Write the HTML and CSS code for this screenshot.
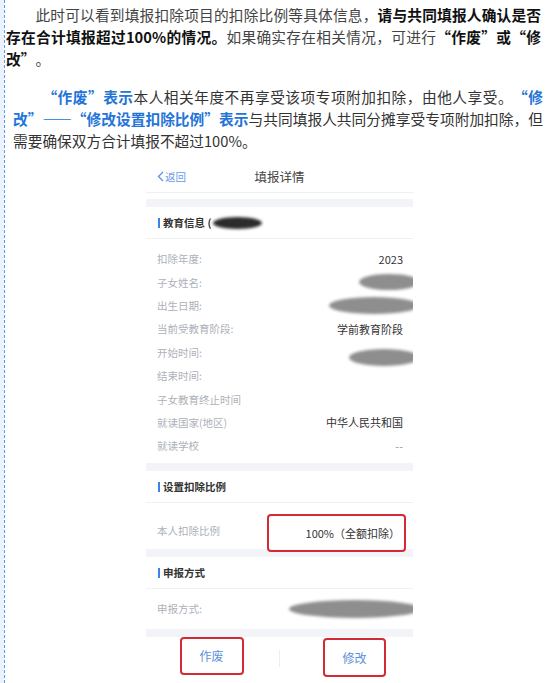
FILE: index.html
```html
<!DOCTYPE html>
<html lang="zh-CN">
<head>
    <meta charset="UTF-8">
    <meta name="viewport" content="width=device-width, initial-scale=1.0">
    <title>填报详情说明</title>
    <link rel="stylesheet" href="styles.css">
</head>
<body>
    <div class="page">
        <p class="intro">此时可以看到填报扣除项目的扣除比例等具体信息，<b>请与共同填报人确认是否存在合计填报超过100%的情况。</b>如果确实存在相关情况，可进行<b>“作废”或“修改”</b>。</p>
        <p class="note"><span class="hl">“作废”表示</span>本人相关年度不再享受该项专项附加扣除，由他人享受。<span class="hl">“修改”——“修改设置扣除比例”表示</span>与共同填报人共同分摊享受专项附加扣除，但需要确保双方合计填报不超过100%。</p>

        <div class="shot">
            <div class="nav">
                <span class="back"><svg width="7" height="11" viewBox="0 0 7 11"><path d="M6 1L1.5 5.5L6 10" fill="none" stroke="#5a93e6" stroke-width="1.3"/></svg>返回</span>
                <span class="nav-title">填报详情</span>
            </div>
            <div class="band"></div>

            <div class="sec-head">教育信息 (<span class="blot dark"></span></div>
            <div class="rows">
                <div class="row"><span class="lbl">扣除年度:</span><span class="val">2023</span></div>
                <div class="row"><span class="lbl">子女姓名:</span><span class="blot name"></span></div>
                <div class="row"><span class="lbl">出生日期:</span><span class="blot birth"></span></div>
                <div class="row"><span class="lbl">当前受教育阶段:</span><span class="val">学前教育阶段</span></div>
                <div class="row"><span class="lbl">开始时间:</span><span class="blot start"></span></div>
                <div class="row"><span class="lbl">结束时间:</span><span class="val"></span></div>
                <div class="row"><span class="lbl">子女教育终止时间</span><span class="val"></span></div>
                <div class="row"><span class="lbl">就读国家(地区)</span><span class="val">中华人民共和国</span></div>
                <div class="row"><span class="lbl">就读学校</span><span class="val dash">--</span></div>
            </div>
            <div class="band"></div>

            <div class="sec-head">设置扣除比例</div>
            <div class="ratio-row">
                <span class="lbl">本人扣除比例</span>
                <span class="ratio mark">100%（全额扣除）</span>
            </div>
            <div class="band"></div>

            <div class="sec-head">申报方式</div>
            <div class="method-row">
                <span class="lbl">申报方式:</span>
                <span class="blot method"></span>
            </div>
            <div class="band"></div>

            <div class="actions">
                <div class="act"><span class="mark btn-void">作废</span></div>
                <div class="act-sep"></div>
                <div class="act"><span class="mark btn-edit">修改</span></div>
            </div>
        </div>
    </div>
</body>
</html>
```

FILE: styles.css
```css
body {
    margin: 0;
    background-color: #eaf2fd;
    font-family: "Noto Sans CJK SC", "Noto Sans", sans-serif;
}
.page {
    margin-left: 4px;
    min-height: 100vh;
    border-left: 1px dashed #5d98ee;
    background-color: #fff;
    overflow: hidden;
}
.intro,
.note {
    margin: 0;
    font-size: 14.7px;
    line-height: 22px;
    text-indent: 2em;
    text-align: justify;
    color: #444;
    text-spacing-trim: space-all;
}
.intro {
    width: 535px;
    margin-left: 1px;
    padding-top: 4px;
}
.intro b {
    color: #111;
}
.note {
    width: 530px;
    margin-left: 8px;
    margin-top: 16px;
    color: #333;
}
.hl {
    color: #2374d8;
    font-weight: bold;
}

/* 截图部分 */
.shot {
    width: 267px;
    margin: 8px 0 0 141px;
    overflow: hidden;
    background-color: #fff;
    font-size: 10.5px;
    color: #333;
}
.nav {
    height: 32px;
    display: flex;
    align-items: center;
    position: relative;
    justify-content: center;
    border-bottom: 1px solid #eef0f2;
    margin-bottom: 6px;
}
.back {
    position: absolute;
    left: 11px;
    top: 9px;
    display: flex;
    align-items: center;
    gap: 1px;
    color: #6a9ce8;
    font-size: 10.5px;
}
.nav-title {
    font-size: 12.5px;
    color: #444;
}
.band {
    height: 8px;
    background-color: #f3f4f7;
}
.sec-head {
    height: 31px;
    display: flex;
    align-items: center;
    padding-left: 17px;
    position: relative;
    border-bottom: 1px solid #eef0f2;
    font-size: 10.5px;
    font-weight: bold;
    color: #333;
}
.sec-head::before {
    content: "";
    position: absolute;
    left: 12px;
    top: 11px;
    width: 2px;
    height: 10px;
    background-color: #3b82f0;
}
.rows {
    padding: 8px 0 5px;
}
.row,
.ratio-row,
.method-row {
    display: flex;
    justify-content: space-between;
    align-items: center;
    padding: 0 10px 0 11px;
}
.row {
    height: 23.4px;
}
.lbl {
    color: #adb1b8;
}
.val {
    color: #333;
    font-size: 11px;
}
.dash {
    color: #999;
}
.blot {
    display: inline-block;
    background-color: #8e8e8e;
    border-radius: 50%;
    filter: blur(1.5px);
}
.blot.dark {
    width: 49px;
    height: 12px;
    margin-left: 2px;
    background-color: #2b2b2b;
}
.blot.name {
    width: 60px;
    height: 16px;
    margin-right: -16px;
}
.blot.birth {
    width: 90px;
    height: 17px;
    margin-right: -16px;
}
.blot.start {
    width: 70px;
    height: 17px;
    margin-right: -16px;
    margin-top: 10px;
}
.ratio-row {
    height: 46px;
    padding-right: 7px;
    align-items: flex-start;
}
.ratio-row .lbl {
    margin-top: 20px;
}
.mark {
    border: 2px solid #d42a36;
    border-radius: 4px;
    box-sizing: border-box;
}
.ratio {
    width: 139px;
    height: 38px;
    margin-top: 11px;
    position: relative;
    display: flex;
    align-items: center;
    justify-content: flex-end;
    padding-right: 4px;
    font-size: 11px;
    color: #333;
}
.method-row {
    height: 40px;
}
.blot.method {
    width: 132px;
    height: 18px;
    margin-right: -18px;
}
.actions {
    height: 46px;
    display: flex;
    align-items: flex-start;
}
.act {
    flex: 1;
    display: flex;
    justify-content: center;
}
.act-sep {
    width: 1px;
    height: 17px;
    margin-top: 13px;
    background-color: #eceef1;
}
.btn-void,
.btn-edit {
    display: flex;
    align-items: center;
    justify-content: center;
    height: 38px;
    width: 64px;
    font-size: 12px;
    color: #5b90dc;
}
.btn-void {
    margin-right: 2px;
}
.btn-edit {
    width: 63px;
    height: 39px;
    margin-top: 1px;
    margin-left: 16px;
}
```
